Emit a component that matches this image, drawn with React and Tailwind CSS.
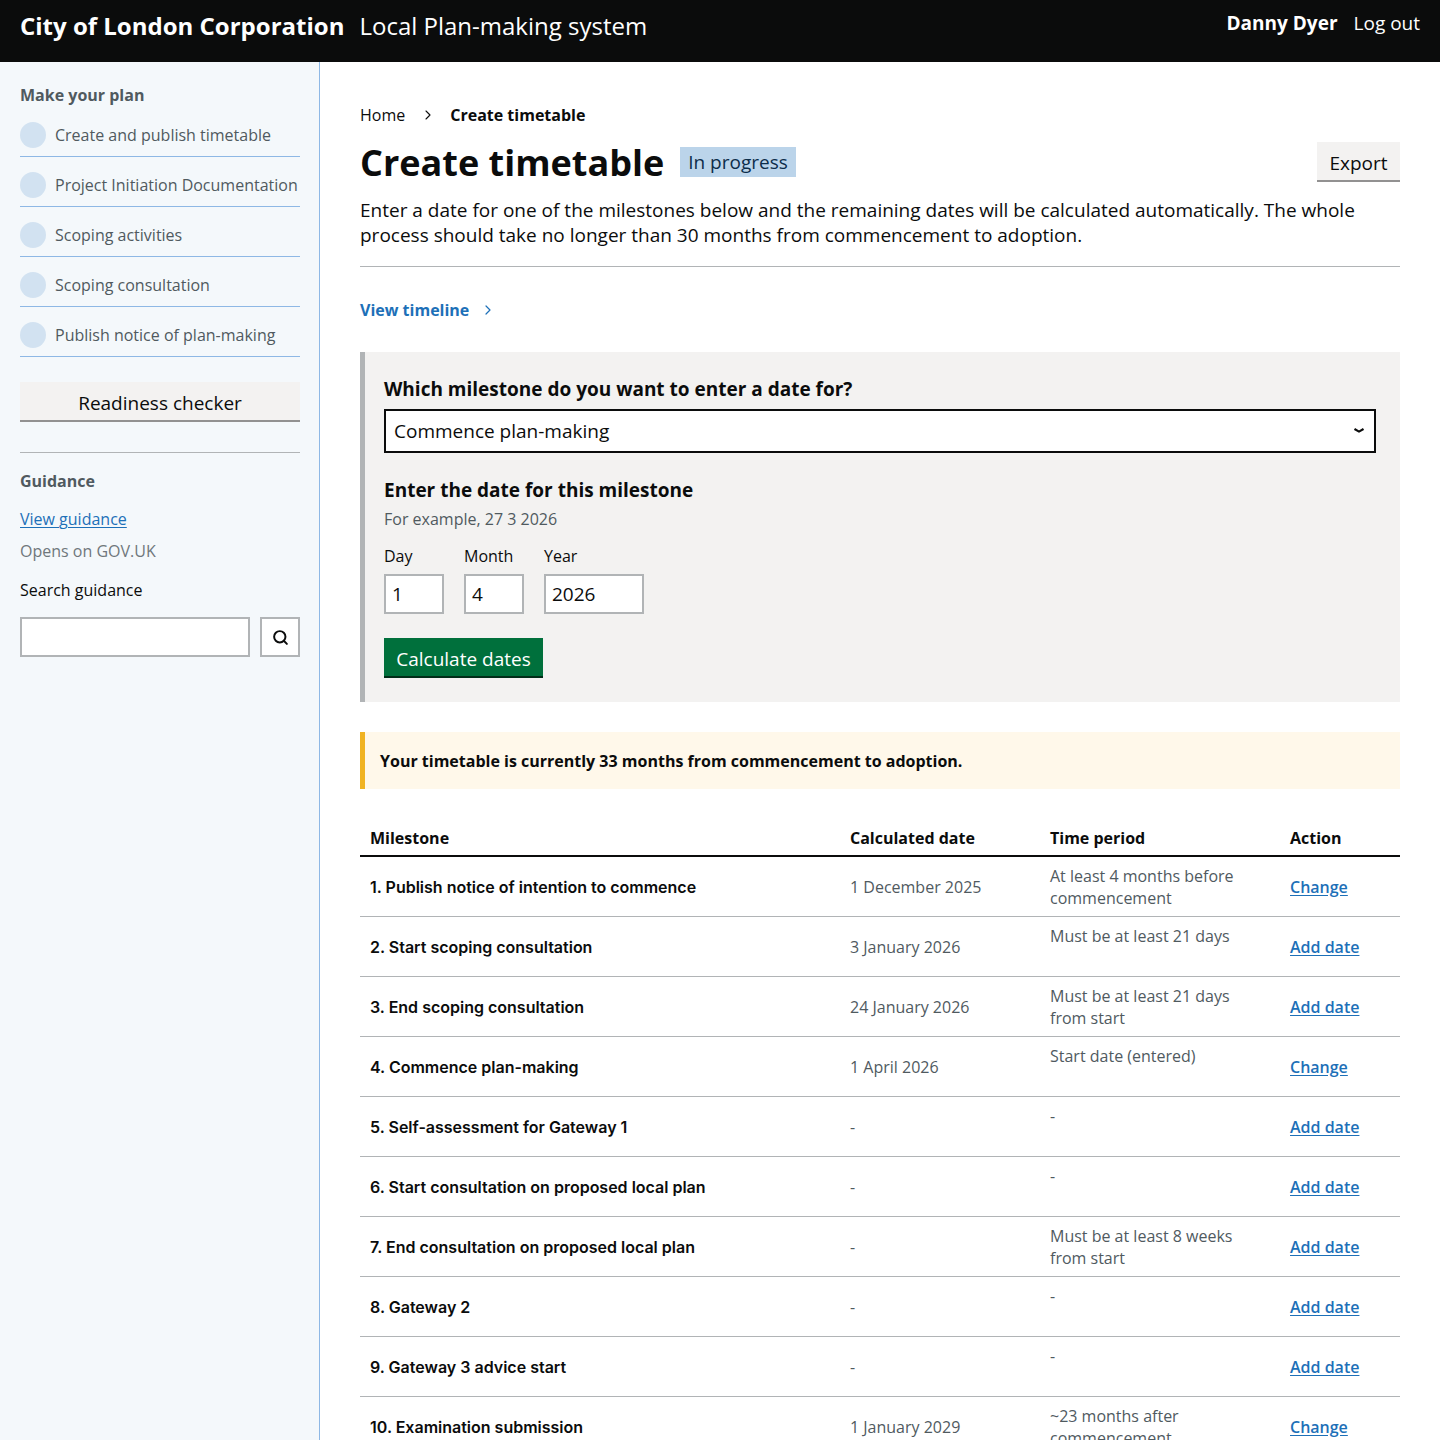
import React from "react";
import { ChevronRight, Search } from "lucide-react";

const steps = ["Create and publish timetable", "Project Initiation Documentation", "Scoping activities", "Scoping consultation", "Publish notice of plan-making"];
const rows = [
  ["1. Publish notice of intention to commence", "1 December 2025", "At least 4 months before commencement", "Change"],
  ["2. Start scoping consultation", "3 January 2026", "Must be at least 21 days", "Add date"],
  ["3. End scoping consultation", "24 January 2026", "Must be at least 21 days from start", "Add date"],
  ["4. Commence plan-making", "1 April 2026", "Start date (entered)", "Change"],
  ["5. Self-assessment for Gateway 1", "-", "-", "Add date"],
  ["6. Start consultation on proposed local plan", "-", "-", "Add date"],
  ["7. End consultation on proposed local plan", "-", "Must be at least 8 weeks from start", "Add date"],
  ["8. Gateway 2", "-", "-", "Add date"],
  ["9. Gateway 3 advice start", "-", "-", "Add date"],
  ["10. Examination submission", "1 January 2029", "~23 months after commencement", "Change"],
];

export default function App() {
  return (
    <div className="h-[1440px] overflow-hidden bg-white font-['Open_Sans',sans-serif] text-[#0b0c0c]">
      <header className="h-[62px] bg-[#0b0c0c] text-white flex justify-between px-5">
        <div className="flex items-center gap-[15px] h-[52px]">
          <span className="text-[24px] font-bold leading-8">City of London Corporation</span>
          <span className="text-[24px] leading-8">Local Plan-making system</span>
        </div>
        <div className="flex items-start gap-4 pt-[11px] text-[19px] leading-6">
          <span className="font-bold">Danny Dyer</span>
          <span>Log out</span>
        </div>
      </header>
      <div className="flex h-[1378px]">
        <aside className="w-[320px] shrink-0 border-r border-[#8eb8e5] bg-[#f4f8fb] pl-5 pr-[19px] pt-[22px]">
          <h2 className="text-[16px] leading-[22px] font-bold text-[#505a5f]">Make your plan</h2>
          <ul className="mt-[1px]">
            {steps.map((s) => (
              <li key={s} className="flex h-[50px] items-start gap-[9px] border-b border-[#8eb8e5] pt-[15px]">
                <span className="h-[26px] w-[26px] rounded-full bg-[#d2e2f1] shrink-0" />
                <span className="text-[16px] leading-[26px] text-[#505a5f] whitespace-nowrap">{s}</span>
              </li>
            ))}
          </ul>
          <button className="mt-[25px] block h-10 w-full border-b-2 border-[#929191] bg-[#f3f2f1] text-[19px] leading-[42px]">Readiness checker</button>
          <hr className="mt-[30px] border-0 border-t border-[#b1b4b6]" />
          <h2 className="mt-[17px] text-[16px] leading-[22px] font-bold text-[#505a5f]">Guidance</h2>
          <a className="mt-4 block text-[16px] leading-[22px] text-[#1d70b8] underline decoration-1 underline-offset-2">View guidance</a>
          <p className="mt-[10px] text-[16px] leading-[22px] text-[#6f777b]">Opens on GOV.UK</p>
          <label className="mt-[17px] block text-[16px] leading-[22px]">Search guidance</label>
          <div className="mt-4 flex gap-[10px]">
            <div className="h-10 flex-1 border-2 border-[#b1b4b6] bg-white" />
            <button className="flex h-10 w-10 items-center justify-center border-2 border-[#b1b4b6] bg-white">
              <Search size={17} strokeWidth={2.8} />
            </button>
          </div>
        </aside>
        <main className="min-w-0 flex-1 px-10 pt-[42px]">
          <nav className="flex items-center text-[16px] leading-[22px]">
            <span>Home</span>
            <ChevronRight size={16} className="ml-[15px] mr-[14px] text-[#0b0c0c]" strokeWidth={1.6} />
            <span className="font-bold">Create timetable</span>
          </nav>
          <div className="mt-4 flex items-start justify-between">
            <div className="flex items-start gap-4">
              <h1 className="text-[36px] leading-[42px] font-bold">Create timetable</h1>
              <span className="mt-[5px] h-[30px] bg-[#bbd4ea] px-2 text-[19px] leading-[30px] text-[#0c2d4a]">In progress</span>
            </div>
            <button className="h-10 w-[83px] border-b-2 border-[#929191] bg-[#f3f2f1] text-[19px] leading-[42px]">Export</button>
          </div>
          <p className="mt-[14px] text-[19px] leading-[25px]">Enter a date for one of the milestones below and the remaining dates will be calculated automatically. The whole process should take no longer than 30 months from commencement to adoption.</p>
          <hr className="mt-[18px] border-0 border-t border-[#b1b4b6]" />
          <a className="mt-[31px] flex items-center text-[16px] leading-[24px] font-bold text-[#1d70b8]">
            View timeline
            <ChevronRight size={16} className="ml-[11px]" strokeWidth={1.8} />
          </a>
          <section className="mt-[30px] h-[350px] border-l-[5px] border-[#b1b4b6] bg-[#f3f2f1] pl-[19px] pr-6 pt-6">
            <h2 className="text-[19px] leading-[27px] font-bold">Which milestone do you want to enter a date for?</h2>
            <div className="mt-[6px] flex h-11 items-center justify-between border-2 border-[#0b0c0c] bg-white pl-2 pr-[10px] text-[19px]">
              <span>Commence plan-making</span>
              <svg width="10" height="6" viewBox="0 0 10 6" fill="none"><path d="M0.5 1 L5 3.6 L9.5 1" stroke="#0b0c0c" strokeWidth="2.2" /></svg>
            </div>
            <h3 className="mt-6 text-[19px] leading-[27px] font-bold">Enter the date for this milestone</h3>
            <p className="mt-[3px] text-[16px] leading-6 text-[#505a5f]">For example, 27 3 2026</p>
            <div className="mt-[13px] flex gap-5">
              {[["Day", "1", "w-[60px]"], ["Month", "4", "w-[60px]"], ["Year", "2026", "w-[100px]"]].map(([l, v, w]) => (
                <div key={l} className={w}>
                  <div className="text-[16px] leading-[24px]">{l}</div>
                  <div className="mt-[6px] h-10 border-2 border-[#b1b4b6] bg-white pl-[6px] text-[19px] leading-[36px]">{v}</div>
                </div>
              ))}
            </div>
            <button className="mt-6 block h-10 w-[159px] border-b-2 border-[#002d18] bg-[#00703c] text-[19px] leading-[42px] text-white">Calculate dates</button>
          </section>
          <div className="mt-[30px] flex h-[57px] items-center border-l-[5px] border-[#f0b323] bg-[#fff8ea] pl-[15px] text-[16px] font-bold">Your timetable is currently 33 months from commencement to adoption.</div>
          <table className="mt-[30px] w-full table-fixed border-separate border-spacing-0">
            <colgroup>
              <col className="w-[480px]" />
              <col className="w-[200px]" />
              <col className="w-[240px]" />
              <col className="w-[120px]" />
            </colgroup>
            <thead>
              <tr className="h-[38px] text-left text-[16px] font-bold">
                <th className="border-b-2 border-[#0b0c0c] pl-[10px] pt-[2px]">Milestone</th>
                <th className="border-b-2 border-[#0b0c0c] pl-[10px] pt-[2px]">Calculated date</th>
                <th className="border-b-2 border-[#0b0c0c] pl-[10px] pt-[2px]">Time period</th>
                <th className="border-b-2 border-[#0b0c0c] pl-[10px] pt-[2px]">Action</th>
              </tr>
            </thead>
            <tbody>
              {rows.map((r) => (
                <tr key={r[0]} className="h-[60px]">
                  <td className="border-b border-[#b1b4b6] pl-[10px] font-['Inter',sans-serif] text-[16px] font-semibold">{r[0]}</td>
                  <td className="border-b border-[#b1b4b6] pl-[10px] text-[16px] text-[#505a5f]">{r[1]}</td>
                  <td className="border-b border-[#b1b4b6] px-[10px] pt-2 pb-[7px] align-top text-[16px] leading-[22px] text-[#505a5f]">{r[2]}</td>
                  <td className="border-b border-[#b1b4b6] pl-[10px] text-[16px] font-semibold text-[#1d70b8] underline underline-offset-2">{r[3]}</td>
                </tr>
              ))}
            </tbody>
          </table>
        </main>
      </div>
    </div>
  );
}
